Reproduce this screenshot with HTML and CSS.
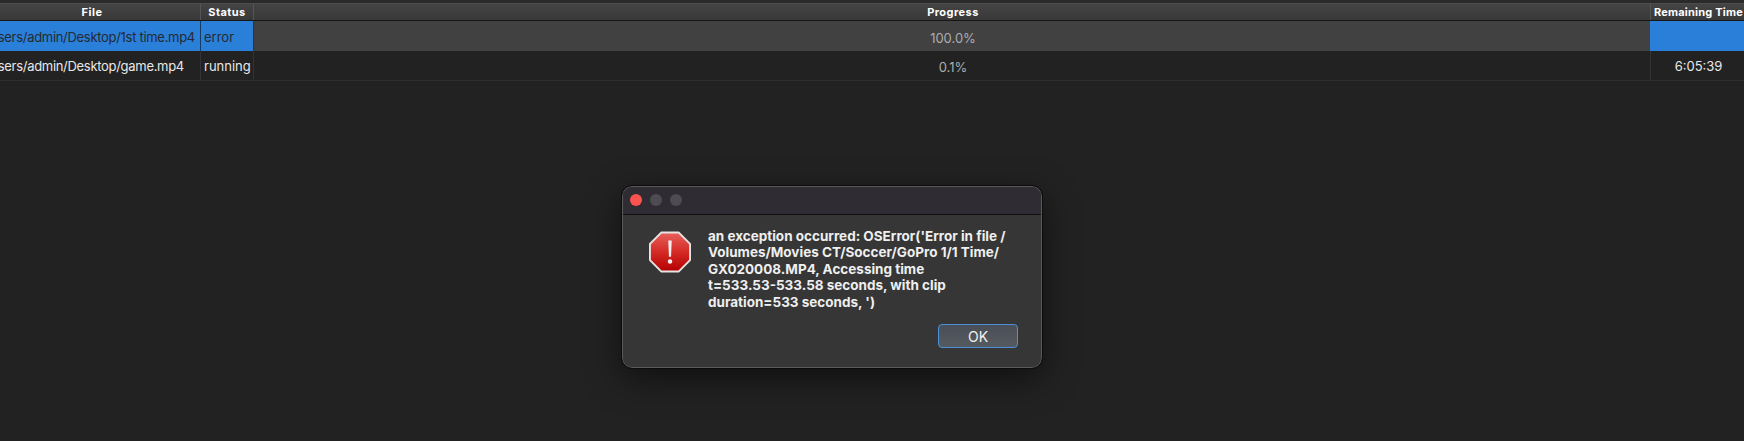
FILE: index.html
```html
<!DOCTYPE html>
<html lang="en">
<head>
  <meta charset="UTF-8">
  <title>Video Jobs</title>
  <link rel="stylesheet" href="styles.css">
</head>
<body>
  <!-- Job table, scrolled a little to the right -->
  <div class="table">
    <div class="row head">
      <div class="cell file">File</div>
      <div class="cell status">Status</div>
      <div class="cell progress">Progress</div>
      <div class="cell remaining">Remaining Time</div>
    </div>
    <div class="row job selected">
      <div class="cell file"><span>/Users/admin/Desktop/1st time.mp4</span></div>
      <div class="cell status"><span>error</span></div>
      <div class="cell progress"><span>100.0%</span></div>
      <div class="cell remaining"></div>
    </div>
    <div class="row job">
      <div class="cell file"><span>/Users/admin/Desktop/game.mp4</span></div>
      <div class="cell status"><span>running</span></div>
      <div class="cell progress"><span>0.1%</span></div>
      <div class="cell remaining"><span>6:05:39</span></div>
    </div>
  </div>

  <!-- Error dialog -->
  <div class="dialog">
    <div class="titlebar">
      <i class="light red"></i>
      <i class="light"></i>
      <i class="light"></i>
    </div>
    <div class="dialog-body">
      <svg class="stop-icon" width="44" height="42" viewBox="0 0 46 44">
        <defs>
          <linearGradient id="stop-fill" x1="0" y1="0" x2="0" y2="1">
            <stop offset="0" stop-color="#e8615c"/>
            <stop offset="0.5" stop-color="#d42a26"/>
            <stop offset="1" stop-color="#b30000"/>
          </linearGradient>
        </defs>
        <polygon points="14,1.5 32,1.5 44,13.5 44,30.5 32,42.5 14,42.5 2,30.5 2,13.5" fill="url(#stop-fill)" stroke="#e9e4e4" stroke-width="2" stroke-linejoin="round"/>
        <path d="M21.2 10h3.6l-.7 17h-2.2z" fill="#f6f1f1"/>
        <circle cx="23" cy="32" r="2.3" fill="#f6f1f1"/>
      </svg>
      <div class="dialog-main">
        <p class="message">an exception occurred: OSError('Error in file /<br>Volumes/Movies CT/Soccer/GoPro 1/1 Time/<br>GX020008.MP4, Accessing time<br>t=533.53-533.58 seconds, with clip<br>duration=533 seconds, ')</p>
        <div class="actions">
          <button class="ok">OK</button>
        </div>
      </div>
    </div>
  </div>
</body>
</html>
```

FILE: styles.css
```css
/* Reset defaults */
* { margin: 0; padding: 0; box-sizing: border-box; }

body {
  background: #222;
  color: #e8e8e8;
  font-family: Inter, "Liberation Sans", sans-serif;
  font-size: 13px;
  height: 441px;
  overflow: hidden;
  position: relative;
}

/* Table */
.table {
  margin-left: -16px;
  padding-top: 3px;
  background: #2a2a2a;
}
.row {
  display: grid;
  grid-template-columns: 217px 53px 1fr 93px;
}
.cell {
  display: flex;
  align-items: center;
  justify-content: center;
  overflow: hidden;
  white-space: nowrap;
  border-right: 1px solid #333;
}
.cell.remaining { border-right: none; }
.cell span { margin-top: 1px; }

.head {
  height: 18px;
  background: linear-gradient(#444, #383838);
  border-top: 1px solid #4c4c4c;
  border-bottom: 1px solid #161616;
  color: #fff;
  font-size: 11px;
  font-weight: 700;
  letter-spacing: 0.45px;
  line-height: 18px;
}
.head .cell { border-right: 1px solid #555; }
.head .progress { padding-left: 2px; }
.head .cell.remaining {
  border-right: none;
  justify-content: flex-start;
  padding-left: 3px;
  letter-spacing: 0.2px;
}

.job {
  height: 30px;
  background: #222;
  border-bottom: 1px solid #2e2e2e;
}
.job .file { justify-content: flex-start; letter-spacing: -0.3px; }
.job .status { justify-content: flex-start; padding-left: 3px; }
.job .progress { color: #adadad; padding-left: 2px; }
.job .progress span { margin-top: 3px; }
.job .remaining { padding-left: 2px; }

.selected { background: #3c3c3c; border-bottom: none; }
.selected .file, .selected .status, .selected .remaining {
  background: #2a7fd9;
  color: #252a30;
  border-right: 1px solid #123b66;
}
.selected .remaining { border-right: none; }
.selected .progress {
  background: #414141;
  border-right: 1px solid #2a7fd9;
}

/* Dialog */
.dialog {
  position: absolute;
  left: 622px;
  top: 186px;
  width: 420px;
  height: 182px;
  background: #363636;
  border: 1px solid #5a5a5a;
  outline: 1px solid #0c0c0c;
  border-radius: 10px;
  box-shadow: 0 10px 34px rgba(0, 0, 0, 0.55);
  overflow: hidden;
}
.titlebar {
  display: flex;
  align-items: center;
  gap: 8px;
  height: 28px;
  padding: 0 0 2px 7px;
  background: #2f2d33;
  border-bottom: 1px solid #111;
}
.light {
  width: 12px;
  height: 12px;
  border-radius: 50%;
  background: #4d4c52;
}
.light.red { background: #fb5350; }

.dialog-body {
  display: flex;
  padding: 16px 23px 0 25px;
}
.stop-icon { flex: none; margin-right: 16px; }
.dialog-main { flex: 1; margin-top: -3px; }
.message {
  color: #efefef;
  font-size: 13.5px;
  font-weight: 700;
  line-height: 16.4px;
  white-space: nowrap;
}
.actions {
  display: flex;
  justify-content: flex-end;
  margin-top: 14px;
}
.ok {
  width: 80px;
  height: 24px;
  background: linear-gradient(#4a4f57, #565a60);
  border: 1px solid #4c90dc;
  border-radius: 4px;
  color: #f2f2f2;
  font-family: inherit;
  font-size: 14px;
}
```
